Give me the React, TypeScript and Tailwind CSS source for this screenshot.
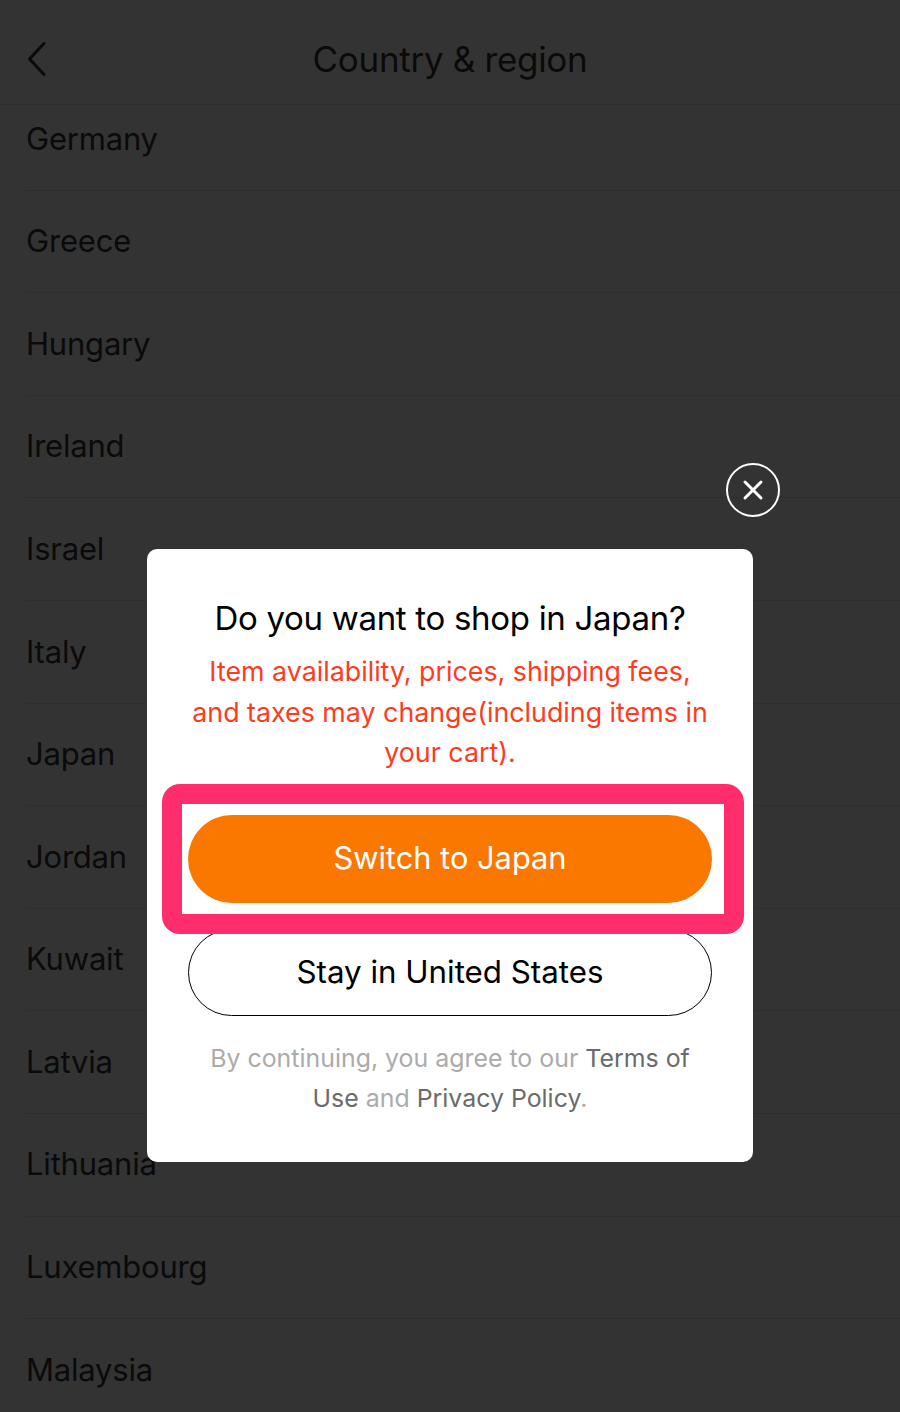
import { X } from 'lucide-react';

const countries = [
  'Germany',
  'Greece',
  'Hungary',
  'Ireland',
  'Israel',
  'Italy',
  'Japan',
  'Jordan',
  'Kuwait',
  'Latvia',
  'Lithuania',
  'Luxembourg',
  'Malaysia',
];

const App = () => {
  return (
    <div
      className="relative h-[1412px] w-full overflow-hidden bg-[#333333] text-[#0a0a0a]"
      style={{ fontFamily: 'Inter, "Noto Sans", sans-serif' }}
    >
      {/* Header */}
      <header className="relative flex h-[105px] items-center justify-center border-b border-[#2e2e2e]">
        <svg className="absolute left-[26px] top-[41px]" width="22" height="36" viewBox="0 0 22 36" fill="none">
          <path d="M18 2.5 L3.5 18 L18 33.5" stroke="#0a0a0a" strokeWidth="3" strokeLinecap="round" strokeLinejoin="round" />
        </svg>
        <h1 className="mt-[14px] text-[35px] font-normal tracking-[-0.3px]">Country &amp; region</h1>
      </header>

      {/* Country list (scrolled) */}
      <div className="overflow-hidden">
        <ul className="-mt-[17px]">
          {countries.map((name) => (
            <li key={name} className="ml-[25px] flex h-[102.6px] items-center border-b border-[#2e2e2e] pl-px">
              <span className="text-[31px] tracking-[-0.2px]">{name}</span>
            </li>
          ))}
        </ul>
      </div>

      {/* Close button */}
      <button className="absolute left-[726px] top-[463px] flex h-[54px] w-[54px] items-center justify-center rounded-full border-2 border-white">
        <X className="h-[32px] w-[32px] text-white" strokeWidth={2.2} />
      </button>

      {/* Modal */}
      <div className="absolute left-[147px] top-[549px] w-[606px] rounded-[10px] bg-white px-[41px] pb-[44px] pt-[49px] text-center">
        <h2 className="text-[33px] leading-[40px] font-normal tracking-[-0.3px] text-black">
          Do you want to shop in Japan?
        </h2>
        <p className="mt-[13px] text-[26.8px] leading-[40.5px] text-[#ff3b1e]">
          <span className="block whitespace-nowrap">Item availability, prices, shipping fees,</span>
          <span className="block whitespace-nowrap">and taxes may change(including items in</span>
          <span className="block whitespace-nowrap">your cart).</span>
        </p>

        <div className="relative mt-[42px]">
          <button className="flex h-[88px] w-full items-center justify-center rounded-full bg-[#fb7800] text-[30.8px] text-white">
            Switch to Japan
          </button>
          {/* highlight annotation */}
          <div className="pointer-events-none absolute -bottom-[31px] -left-[26px] -right-[32px] -top-[31px] rounded-[18px] border-[20px] border-[#ff2d6c]" />
        </div>

        <button className="mt-[26px] flex h-[87px] w-full items-center justify-center rounded-full border-[1.5px] border-black text-[31.3px] text-black">
          Stay in United States
        </button>

        <p className="mt-[22px] text-[24.9px] leading-[40px] text-[#ababab]">
          <span className="block whitespace-nowrap">
            By continuing, you agree to our <span className="text-[#6b6b6b]">Terms of</span>
          </span>
          <span className="block whitespace-nowrap">
            <span className="text-[#6b6b6b]">Use</span> and <span className="text-[#6b6b6b]">Privacy Policy</span>.
          </span>
        </p>
      </div>
    </div>
  );
};

export default App;
